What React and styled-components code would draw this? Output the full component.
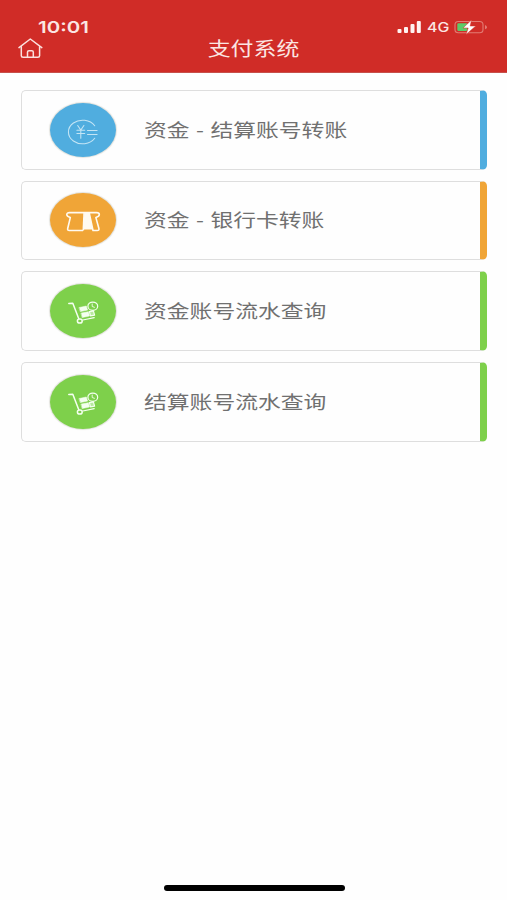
import React from 'react'
import styled, { createGlobalStyle } from 'styled-components'

const GlobalStyle = createGlobalStyle`
    * {
        box-sizing: border-box;
    }

    body {
        margin: 0;
        background: #fefefe;
        font-family: "Liberation Sans", "Noto Sans CJK SC", sans-serif;
    }
`;

const Screen = styled.div`
    height: 900px;
    display: flex;
    flex-direction: column;
    overflow: hidden;
`;

const Header = styled.header`
    height: 73px;
    flex: none;
    padding-top: 17px;
    background: #d02c27;
    border-bottom: 1px solid #c6504b;
    color: #fbe6e3;
`;

const StatusBar = styled.div`
    height: 19px;
    padding: 0 19px 0 38px;
    display: flex;
    align-items: center;
    justify-content: space-between;
`;

const Time = styled.span`
    font-family: Inter, sans-serif;
    font-size: 16.5px;
    font-weight: 600;
    line-height: 20px;
    transform: scaleX(1.24);
    transform-origin: left;
`;

const StatusIcons = styled.div`
    display: flex;
    align-items: center;
`;

const Network = styled.span`
    width: 22px;
    margin: 0 5px 0 5px;
    font-family: Inter, sans-serif;
    font-size: 13px;
    font-weight: 500;
    line-height: 20px;
    transform: scaleX(1.22);
    transform-origin: left;
`;

const NavBar = styled.nav`
    height: 23px;
    padding: 0 18px;
    display: grid;
    grid-template-columns: 26px 1fr 26px;
    align-items: center;

    &>h1 {
        margin: 0;
        font-family: "Noto Sans CJK SC", sans-serif;
        font-size: 18.8px;
        font-weight: 400;
        line-height: 23px;
        text-align: center;
        transform: scaleX(1.22);
    }
`;

const Menu = styled.main`
    flex: 1;
    padding: 17px 20px 0 21px;
    display: flex;
    flex-direction: column;
    gap: 11.2px;
`;

const Card = styled.div`
    height: 79.5px;
    padding-left: 28px;
    display: flex;
    align-items: center;
    border: 1px solid #dedede;
    border-right: 7px solid ${props => props.$color};
    border-radius: 5px;
    background: #fefefe;
`;

const IconDisc = styled.div`
    width: 66px;
    height: 54px;
    flex: none;
    margin-top: -0.4px;
    border-radius: 50%;
    background: ${props => props.$color};
    box-shadow: 0 0 1px 1px #e2e2dd;

    &>svg {
        display: block;
    }
`;

const Label = styled.span`
    margin: -2px 0 0 28.3px;
    font-family: "Noto Sans CJK SC", sans-serif;
    font-size: 18.7px;
    line-height: 24px;
    word-spacing: 1.1px;
    white-space: pre;
    color: #707070;
    transform: scaleX(1.22);
    transform-origin: left;
`;

const HomeIndicator = styled.div`
    width: 181px;
    height: 6px;
    flex: none;
    align-self: center;
    margin: 0 0 9px 1px;
    border-radius: 3px;
    background: #000;
`;

const HomeIcon = () => (
    <svg width="26" height="23" viewBox="0 -0.8 26 23" fill="none" stroke="#fbe0dd" strokeWidth="1.5" strokeLinecap="round" strokeLinejoin="round">
        <path d="M1 10.8 12.3 2.2 23.8 10.8" />
        <path d="M3.3 10v9q0 1.5 1.8 1.5h14.7q1.8 0 1.8-1.5v-9" />
        <path d="M9.5 20.3v-5q0-1.4 1.5-1.4h2.8q1.5 0 1.5 1.4v5" />
    </svg>
)

const SignalIcon = () => (
    <svg width="25" height="14" viewBox="0 0 25 14" fill="#fff3f1">
        <rect x="0.5" y="9" width="4" height="4" rx="1" />
        <rect x="7" y="7" width="4" height="6" rx="1" />
        <rect x="13.5" y="4" width="4" height="9" rx="1" />
        <rect x="19.8" y="1" width="4" height="12" rx="1" />
    </svg>
)

const BatteryIcon = () => (
    <svg width="34" height="16" viewBox="0 0 34 16">
        <rect x="1" y="2.5" width="28" height="11.3" rx="3.3" fill="none" stroke="#e27c74" strokeWidth="1.1" />
        <path d="M31 6v4.3q2-.7 2-2.1T31 6Z" fill="#e27c74" />
        <rect x="3.3" y="4.3" width="10" height="7.8" rx="1.3" fill="#5dcb68" />
        <path d="M17.5 1 9 9h5.2l-2.2 6.5L21.8 7h-5.6Z" fill="#fff" stroke="#d02c27" strokeWidth="0.5" />
    </svg>
)

const YuanIcon = () => (
    <svg width="66" height="54" viewBox="0 0 66 54" fill="none" stroke="#c4e5f5" strokeWidth="1.05" strokeLinecap="round">
        <path d="M44.7 22.8A14.2 11.8 0 1 0 44.7 35.2" />
        <path d="m27.7 22.5 3.1 4.6 3.1-4.6M30.8 27.1v8.2M26.9 27.3h7.8M26.9 30.5h7.8" />
        <path d="M37.5 27.5h9.6M37.5 31.4h9.6" />
    </svg>
)

const CardIcon = () => (
    <svg width="66" height="54" viewBox="0 0 66 54" fill="none" stroke="#fffaf0" strokeWidth="1.6" strokeLinejoin="round">
        <path d="M33 37.5H19.3c-1.4 0-1.9-.6-1.6-2L20.3 24.6C15.4 23.2 16.1 19.6 19.5 19.6H46.6C50 19.6 50.7 23.2 45.9 24.6L48.9 35.5c.3 1.4-.2 2-1.7 2H43L39.2 20" />
        <path d="M34.3 20h4.9l3.4 16.6h-9.4Z" fill="#fffaf0" stroke="none" />
        <path d="M34.1 20 33.3 37.5" />
    </svg>
)

const CartIcon = () => (
    <svg width="66" height="54" viewBox="0 0 66 54" fill="none" stroke="#f4fff0" strokeWidth="1.2" strokeLinecap="round" strokeLinejoin="round">
        <path d="M18.8 19.5 22.8 19.2 28.7 34.6" strokeWidth="1.5" />
        <ellipse cx="29.8" cy="37" rx="2.4" ry="2.1" strokeWidth="1.5" />
        <path d="m32.9 36 11.3-2.4" />
        <path d="m29.3 23.5 7-1.5 1.3 4.1-7 1.4ZM31.3 29.1l7.1-1.4 1.1 4.3-7.1 1.5Z" fill="#f4fff0" strokeWidth="0.5" />
        <path d="m39.4 27.6 4-.8 1.2 4.3-4.1.8Z" fill="#b6e99d" />
        <ellipse cx="42.8" cy="22.2" rx="4.9" ry="4.1" />
        <path d="M42.2 20v2.5l2.2.8" strokeWidth="0.9" />
    </svg>
)

const items = [
    { label: '资金 - 结算账号转账', color: '#50addf', Icon: YuanIcon },
    { label: '资金 - 银行卡转账', color: '#f0a537', Icon: CardIcon },
    { label: '资金账号流水查询', color: '#7ed04b', Icon: CartIcon },
    { label: '结算账号流水查询', color: '#7ed04b', Icon: CartIcon },
]

const App = () => {
  return (
      <Screen>
          <GlobalStyle />
          <Header>
              <StatusBar>
                  <Time>10:01</Time>
                  <StatusIcons>
                      <SignalIcon />
                      <Network>4G</Network>
                      <BatteryIcon />
                  </StatusIcons>
              </StatusBar>
              <NavBar>
                  <HomeIcon />
                  <h1>支付系统</h1>
              </NavBar>
          </Header>
          <Menu>
              {items.map(({ label, color, Icon }) => (
                  <Card key={label} $color={color}>
                      <IconDisc $color={color}><Icon /></IconDisc>
                      <Label>{label}</Label>
                  </Card>
              ))}
          </Menu>
          <HomeIndicator />
      </Screen>
  )
}

export default App
